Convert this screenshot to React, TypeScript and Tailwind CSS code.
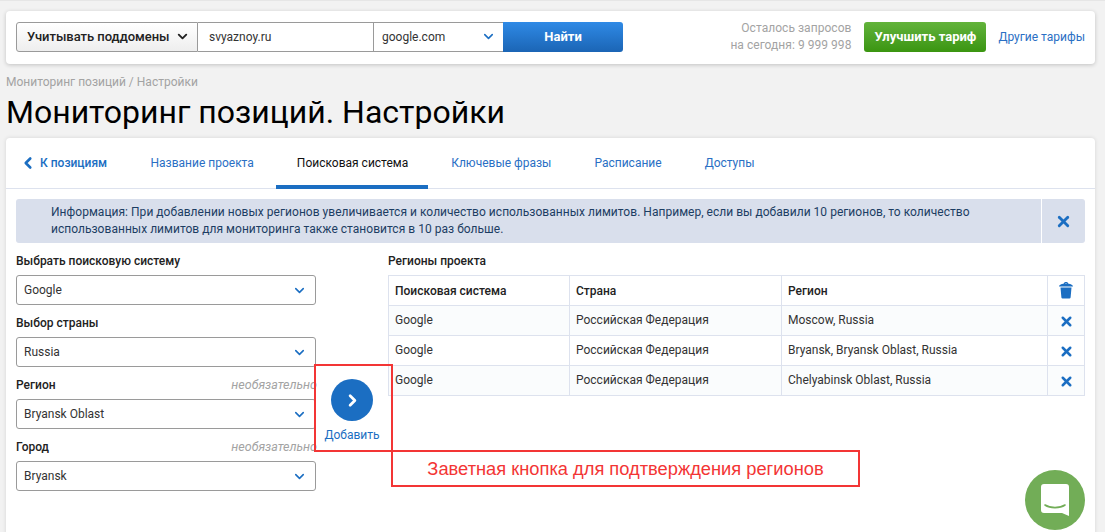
import React from "react";
import { ChevronDown, ChevronLeft, ChevronRight, X } from "lucide-react";

const font = "font-['Roboto',sans-serif]";

const tabs = ["Название проекта", "Поисковая система", "Ключевые фразы", "Расписание", "Доступы"];

const rows = [
  ["Google", "Российская Федерация", "Moscow, Russia"],
  ["Google", "Российская Федерация", "Bryansk, Bryansk Oblast, Russia"],
  ["Google", "Российская Федерация", "Chelyabinsk Oblast, Russia"],
];

const fields = [
  { label: "Выбрать поисковую систему", value: "Google", optional: false },
  { label: "Выбор страны", value: "Russia", optional: false },
  { label: "Регион", value: "Bryansk Oblast", optional: true },
  { label: "Город", value: "Bryansk", optional: true },
];

const TrashIcon = () => (
  <svg width="14" height="17" viewBox="0 0 14 17" className="text-[#1b6ec2]" fill="currentColor">
    <path d="M1.5 5.5h11l-.9 10a1.2 1.2 0 0 1-1.2 1H3.6a1.2 1.2 0 0 1-1.2-1z" />
    <path d="M0 4.4C0 3 2 2 4.6 1.7 4.8.7 5.8 0 7 0s2.2.7 2.4 1.7C12 2 14 3 14 4.4zM5.7 1.6h2.6C8.1 1.2 7.6 1 7 1s-1.1.2-1.3.6z" />
  </svg>
);

const App = () => {
  return (
    <div className={`${font} relative h-[532px] w-[1105px] overflow-hidden bg-[#f2f2f2] text-[12px] text-[#222]`}>
      <div className="h-px bg-[#e6e6e6]" />
      {/* Top search bar */}
      <div className="ml-[6px] mr-[10px] mt-[10px] flex h-[53px] items-center rounded-[4px] bg-white pb-[2px] pl-[10px] pr-[10px] shadow-[0_1px_4px_rgba(0,0,0,0.2)]">
        <div className="flex h-[30px] w-[607px]">
          <div className="flex w-[182px] items-center rounded-l-[3px] border border-[#9a9a9a] bg-gradient-to-b from-white to-[#eeeeee] pl-[10px] text-[13px] font-medium tracking-[-0.04px]">
            Учитывать поддомены
            <ChevronDown size={15} strokeWidth={3} className="ml-[6px]" />
          </div>
          <div className="flex w-[176px] items-center border-y border-r border-[#9a9a9a] pl-[11px] text-[12px] text-[#333]">
            svyaznoy.ru
          </div>
          <div className="flex w-[129px] items-center justify-between border-y border-[#9a9a9a] pl-[8px] pr-[7px] text-[12px] text-[#333]">
            google.com
            <ChevronDown size={15} strokeWidth={2.5} className="text-[#1b6ec2]" />
          </div>
          <div className="flex flex-1 items-center justify-center rounded-r-[3px] bg-gradient-to-b from-[#2f8ae6] to-[#1b65b5] text-[13px] font-bold text-white">
            Найти
          </div>
        </div>
        <div className="ml-auto mr-[13px] text-right text-[12px] leading-[17px] tracking-[0.04px] text-[#a3a3a3]">
          <div>Осталось запросов</div>
          <div>на сегодня: 9 999 998</div>
        </div>
        <div className="flex h-[30px] w-[122px] items-center justify-center rounded-[3px] bg-gradient-to-b from-[#62b33a] to-[#3a950f] text-[13px] font-bold text-white">
          Улучшить тариф
        </div>
        <a className="ml-[12px] text-[12px] text-[#2a6fc4]">Другие тарифы</a>
      </div>

      <div className="ml-[6px] mt-[10px] text-[12px] leading-[16px] text-[#a3a3a3]">Мониторинг позиций / Настройки</div>
      <h1 className="ml-[6px] mt-[2px] text-[32px] font-normal leading-[40px] text-black">Мониторинг позиций. Настройки</h1>

      {/* Main card */}
      <div className="ml-[6px] mr-[10px] mt-[6px] h-[400px] rounded-t-[4px] bg-white shadow-[0_0_4px_rgba(0,0,0,0.12)]">
        <div className="flex h-[51px] border-b border-[#dde2ee] pl-[14px]">
          <a className="flex w-[109px] items-center text-[12px] font-medium text-[#1b6ec2]">
            <ChevronLeft size={18} strokeWidth={3.5} className="-ml-[1px] mr-[3px]" />
            <span>К позициям</span>
          </a>
          {tabs.map((tab, i) => (
            <a
              key={tab}
              className={
                i === 1
                  ? "-mb-px ml-[0.5px] mr-[1.5px] flex items-center border-b-[4px] border-[#1b6ec2] pl-[21px] pr-[20px] pt-[3px] text-[12px] text-[#111]"
                  : "flex items-center px-[21.5px] text-[12px] text-[#2a6fc4]"
              }
            >
              {tab}
            </a>
          ))}
        </div>

        {/* Info alert */}
        <div className="ml-[10px] mr-[10px] mt-[10px] flex h-[44px] rounded-[3px] bg-[#d9dfec] text-[12px] leading-[17px] tracking-[0.027px] text-[#1c3d63]">
          <div className="flex-1 pl-[35px] pt-[5px] pr-[60px]">
            Информация: При добавлении новых регионов увеличивается и количество использованных лимитов. Например, если вы добавили 10 регионов, то количество использованных лимитов для мониторинга также становится в 10 раз больше.
          </div>
          <div className="flex w-[44px] items-center justify-center border-l border-white text-[#1b6ec2]">
            <X size={17} strokeWidth={4} />
          </div>
        </div>

        <div className="ml-[10px] mr-[10px] mt-[10px] flex">
          {/* Selects */}
          <div className="flex w-[300px] flex-col gap-[10px]">
            {fields.map((f) => (
              <div key={f.label}>
                <div className="flex h-[22px] items-start justify-between text-[12px] font-medium leading-[16px]">
                  {f.label}
                  {f.optional && <span className="-mr-[1px] text-[12.5px] font-normal italic text-[#a3a3a3]">необязательно</span>}
                </div>
                <div className="flex h-[30px] items-center justify-between rounded-[3px] border border-[#9a9a9a] pl-[7px] pr-[8px] text-[12px] text-[#333]">
                  {f.value}
                  <ChevronDown size={15} strokeWidth={2.5} className="text-[#1b6ec2]" />
                </div>
              </div>
            ))}
          </div>

          {/* Add button */}
          <div className="flex w-[72px] flex-col items-center pt-[126px]">
            <div className="flex h-[42px] w-[42px] items-center justify-center rounded-full bg-[#1b6ec2] text-white">
              <ChevronRight size={19} strokeWidth={3.5} />
            </div>
            <span className="mt-[5px] text-[12px] text-[#1b6ec2]">Добавить</span>
          </div>

          {/* Regions table */}
          <div className="flex-1">
            <div className="h-[22px] text-[12px] font-medium leading-[16px]">Регионы проекта</div>
            <table className="w-full table-fixed border-collapse border border-[#dde2ee] text-[12px] text-[#333]">
              <colgroup>
                <col className="w-[181px]" />
                <col className="w-[212px]" />
                <col className="w-[266px]" />
                <col />
              </colgroup>
              <thead>
                <tr className="h-[30px] text-left text-[#222]">
                  <th className="border border-[#dde2ee] px-[6px] font-medium">Поисковая система</th>
                  <th className="border border-[#dde2ee] px-[6px] font-medium">Страна</th>
                  <th className="border border-[#dde2ee] px-[6px] font-medium">Регион</th>
                  <th className="border border-[#dde2ee]">
                    <div className="flex justify-center"><TrashIcon /></div>
                  </th>
                </tr>
              </thead>
              <tbody>
                {rows.map((r, i) => (
                  <tr key={r[2]} className={i % 2 === 0 ? "h-[30px] bg-[#fafcfd]" : "h-[30px]"}>
                    {r.map((c, j) => (
                      <td key={j} className="border border-[#dde2ee] px-[6px] pb-[2px]">{c}</td>
                    ))}
                    <td className="border border-[#dde2ee] pt-[2px] text-[#1b6ec2]">
                      <div className="flex justify-center"><X size={15} strokeWidth={4} /></div>
                    </td>
                  </tr>
                ))}
              </tbody>
            </table>
          </div>
        </div>
      </div>

      {/* Red annotations over the screenshot */}
      <div className="absolute left-[314px] top-[364px] h-[88px] w-[79px] border-2 border-[#f33535]" />
      <div className="absolute left-[391px] top-[450px] flex h-[37px] w-[469px] items-center justify-center border-2 border-[#f33535] pt-[1px] font-['Liberation_Sans',sans-serif] text-[18.3px] text-[#f33535]">
        Заветная кнопка для подтверждения регионов
      </div>

      {/* Chat widget */}
      <div className="absolute left-[1025px] top-[470px] flex h-[60px] w-[60px] items-center justify-center rounded-full bg-[#72ad57]">
        <svg width="28" height="32" viewBox="0 0 28 32">
          <path d="M3 0h22a3 3 0 0 1 3 3v29l-7-3H3a3 3 0 0 1-3-3V3a3 3 0 0 1 3-3z" fill="#fff" />
          <path d="M4 21c5 3.5 15 3.5 20 0" fill="none" stroke="#72ad57" strokeWidth="1.6" strokeLinecap="round" />
        </svg>
      </div>
    </div>
  );
};

export default App;
